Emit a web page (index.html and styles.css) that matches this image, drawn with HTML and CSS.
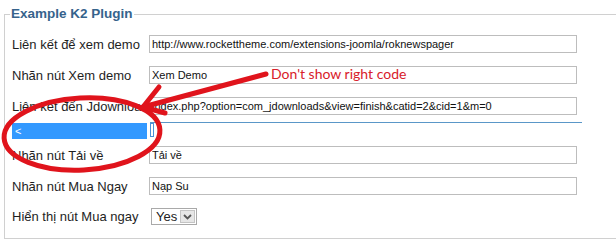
FILE: index.html
```html
<!DOCTYPE html>
<html lang="vi">
  <head>
    <meta charset="utf-8" />
    <title>Example K2 Plugin</title>
    <link rel="stylesheet" href="styles.css">
  </head>
  <body>
    <fieldset class="panel">
      <legend>Example K2 Plugin</legend>
      <div class="row">
        <label>Liên kết để xem demo</label>
        <input class="field" type="text" value="http://www.rockettheme.com/extensions-joomla/roknewspager" />
      </div>
      <div class="row">
        <label>Nhãn nút Xem demo</label>
        <input class="field" type="text" value="Xem Demo" />
      </div>
      <div class="row">
        <label>Liên kết đến Jdownload</label>
        <input class="field" type="text" value="index.php?option=com_jdownloads&amp;view=finish&amp;catid=2&amp;cid=1&amp;m=0" />
      </div>
      <!-- this is the broken row the user is pointing at -->
      <div class="row broken">
        <div class="selected">&lt;</div>
        <div class="leftover">
          <span class="caret"></span>
        </div>
      </div>
      <div class="row">
        <label>Nhãn nút Tải về</label>
        <input class="field" type="text" value="Tải về" />
      </div>
      <div class="row">
        <label>Nhãn nút Mua Ngay</label>
        <input class="field" type="text" value="Nạp Su" />
      </div>
      <div class="row">
        <label>Hiển thị nút Mua ngay</label>
        <div class="select">
          <span class="select-value">Yes</span>
          <span class="select-btn">
            <svg width="9" height="6" viewBox="0 0 9 6"><path d="M1 1 L4.5 4.5 L8 1" fill="none" stroke="#555" stroke-width="1.8"/></svg>
          </span>
        </div>
      </div>
    </fieldset>

    <div class="note">Don't show right code</div>
    <svg class="marks" width="616" height="249" viewBox="0 0 616 249">
      <ellipse cx="82" cy="134" rx="78" ry="36" fill="none" stroke="#e0141c" stroke-width="5" transform="rotate(-3 82 134)"/>
      <path d="M266 74 L143 107" stroke="#e0141c" stroke-width="5" stroke-linecap="round"/>
      <path d="M159 87 L143 107 L165 113" fill="none" stroke="#e0141c" stroke-width="5" stroke-linecap="round" stroke-linejoin="round"/>
    </svg>
  </body>
</html>
```

FILE: styles.css
```css
body {
  margin: 0;
  font-family: "Liberation Sans", Arial, sans-serif;
  background: #fff;
  position: relative;
  overflow: hidden;
}

.panel {
  margin: 5px -30px 0 4px;
  padding: 12px 0 13px 7px;
  border: 1px solid #d0d0d0;
}

.panel legend {
  padding: 0 1px;
  margin-left: -2px;
  font-size: 13.5px;
  line-height: 18px;
  font-weight: bold;
  color: #36638c;
}

.row {
  display: flex;
  align-items: center;
  margin-bottom: 13px;
}

.row:last-child {
  margin-bottom: 0;
}

.row label {
  width: 137px;
  font-size: 13px;
  color: #1e1e1e;
  white-space: nowrap;
}

.field {
  width: 428px;
  height: 18px;
  box-sizing: border-box;
  padding: 0 2px;
  border: 1px solid #bdbdbd;
  font-family: "Liberation Sans", Arial, sans-serif;
  font-size: 11px;
  color: #111;
}

.broken {
  align-items: flex-start;
  margin-top: -6px;
  margin-bottom: 7px;
}

.selected {
  width: 135px;
  height: 16px;
  margin-top: 1px;
  padding-left: 3px;
  box-sizing: border-box;
  background: #3399ff;
  color: #fff;
  font-size: 11px;
  line-height: 16px;
}

.leftover {
  width: 432px;
  margin-left: 3px;
  border-top: 1px solid #5a97c8;
}

.caret {
  display: block;
  width: 4px;
  height: 14px;
  border: 1px solid #4a90d9;
  box-sizing: border-box;
}

.select {
  display: flex;
  align-items: center;
  width: 46px;
  height: 17px;
  margin-left: 2px;
  box-sizing: border-box;
  border: 1px solid #a9a9a9;
  font-size: 13px;
}

.select-value {
  flex: 1;
  padding-left: 4px;
  color: #222;
}

.select-btn {
  display: flex;
  align-items: center;
  justify-content: center;
  width: 15px;
  height: 13px;
  margin-right: 1px;
  background: #e6e6e6;
  border: 1px solid #c4c4c4;
  box-sizing: border-box;
}

.note {
  position: absolute;
  left: 271px;
  top: 65px;
  font-family: Lato, sans-serif;
  font-size: 14px;
  color: #d8202a;
}

.marks {
  position: absolute;
  left: 0;
  top: 0;
  pointer-events: none;
}
```
